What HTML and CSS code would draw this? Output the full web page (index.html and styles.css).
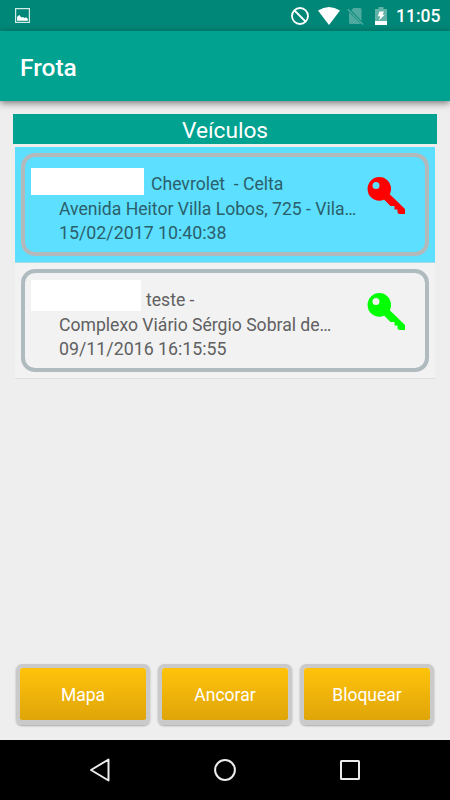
FILE: index.html
```html
<!DOCTYPE html>
<html lang="pt-BR">
<head>
    <meta charset="UTF-8">
    <meta name="viewport" content="width=device-width, initial-scale=1.0">
    <title>Frota</title>
    <link rel="stylesheet" href="styles.css">
</head>
<body>
    <div class="status-bar">
        <svg class="icon-picture" width="15" height="15" viewBox="0 0 15 15">
            <rect x="0.6" y="0.6" width="13.8" height="13.8" fill="none" stroke="#d5ebe8" stroke-width="1.2"/>
            <path d="M2 12.7V9l1.3-1.2L4.5 7l1.5 2.2h2.5L9.5 10l1.5-.8 1.8 1.5v2z" fill="#fff"/>
        </svg>
        <div class="status-icons">
            <svg width="18" height="18" viewBox="0 0 18 18">
                <circle cx="9" cy="9" r="8" fill="none" stroke="#fff" stroke-width="1.8"/>
                <path d="M3.5 3.5l11 11" stroke="#fff" stroke-width="1.8"/>
            </svg>
            <svg class="icon-wifi" width="22" height="18" viewBox="0 0 22 18">
                <path d="M0 3.5Q11-3.5 22 3.5L11 18z" fill="#fff"/>
            </svg>
            <svg class="icon-sim" width="17" height="18" viewBox="0 0 17 18">
                <path d="M6.5 1H13q1.5 0 1.5 1.5V14L4.2 3.300zM2 5.200L14 17H3.500Q2 17 2 15.500z" fill="#4eaa9e"/>
                <path d="M.8 2.300L16 17.500" stroke="#4eaa9e" stroke-width="1.500"/>
            </svg>
            <svg class="icon-battery" width="12" height="18" viewBox="0 0 12 18">
                <path d="M3.5 0h5v2H12v12H0V2h3.5z" fill="#61b3a8"/>
                <path d="M0 14h12v4H0z" fill="#fff"/>
                <path d="M4.5 4.5h4.5L7.700 7.800h2L4 13.500l1.200-4.200H2.800z" fill="#fff"/>
            </svg>
            <span class="clock">11:05</span>
        </div>
    </div>

    <header class="app-bar">
        <h1>Frota</h1>
    </header>

    <main class="content">
        <h2 class="list-title">Veículos</h2>

        <div class="vehicle-list">
            <div class="vehicle selected">
                <div class="card">
                    <div class="info">
                        <div class="name"><span class="plate"></span>Chevrolet&nbsp; - Celta</div>
                        <div class="address">Avenida Heitor Villa Lobos, 725 - Vila…</div>
                        <div class="date">15/02/2017 10:40:38</div>
                    </div>
                    <svg class="key key-locked" width="38" height="38" viewBox="0 0 38 38">
                        <path fill-rule="evenodd" d="M12.300 0a11.700 11.900 0 1 1 0 23.800a11.700 11.900 0 1 1 0-23.800zM9 5a3.500 3.500 0 1 0 0 7a3.500 3.500 0 1 0 0-7z"/>
                        <path d="M22 16.500L38.500 32.500v4.500h-6.500l-1.500-1.500V32.500H27.500V29h-4l-6.500-6.500z"/>
                    </svg>
                </div>
            </div>
            <div class="vehicle">
                <div class="card">
                    <div class="info">
                        <div class="name"><span class="plate"></span>teste -</div>
                        <div class="address">Complexo Viário Sérgio Sobral de…</div>
                        <div class="date">09/11/2016 16:15:55</div>
                    </div>
                    <svg class="key key-free" width="38" height="38" viewBox="0 0 38 38">
                        <path fill-rule="evenodd" d="M12.300 0a11.700 11.900 0 1 1 0 23.800a11.700 11.900 0 1 1 0-23.800zM9 5a3.500 3.500 0 1 0 0 7a3.500 3.500 0 1 0 0-7z"/>
                        <path d="M22 16.500L38.500 32.500v4.500h-6.500l-1.500-1.500V32.500H27.500V29h-4l-6.500-6.500z"/>
                    </svg>
                </div>
            </div>
        </div>

        <div class="actions">
            <button type="button">Mapa</button>
            <button type="button">Ancorar</button>
            <button type="button">Bloquear</button>
        </div>
    </main>

    <nav class="nav-bar">
        <svg width="22" height="26" viewBox="0 0 22 26">
            <path d="M20.5 2.5v21L3 13z" fill="none" stroke="#ececec" stroke-width="2" stroke-linejoin="round"/>
        </svg>
        <svg width="22" height="22" viewBox="0 0 22 22">
            <circle cx="11" cy="11" r="9.9" fill="none" stroke="#ececec" stroke-width="2"/>
        </svg>
        <svg width="20" height="20" viewBox="0 0 20 20">
            <rect x="1" y="1" width="18" height="18" rx="0.5" fill="none" stroke="#ececec" stroke-width="2"/>
        </svg>
    </nav>
</body>
</html>
```
FILE: styles.css
```css
* {
    box-sizing: border-box;
}

html, body {
    height: 100%;
    margin: 0;
    padding: 0;
}

body {
    display: flex;
    flex-direction: column;
    font-family: Roboto, "Liberation Sans", sans-serif;
    background-color: #eeeeee;
    overflow: hidden;
}

svg {
    display: block;
    flex: none;
}

.status-bar {
    flex: none;
    height: 31px;
    padding: 0 10px 0 15px;
    display: flex;
    align-items: center;
    justify-content: space-between;
    background-color: #018777;
}

.status-icons {
    display: flex;
    align-items: center;
}

.icon-wifi {
    margin-left: 9px;
}

.icon-sim {
    margin-left: 7px;
}

.icon-battery {
    margin-left: 11px;
}

.clock {
    width: 44px;
    margin-left: 9px;
    font-size: 17.5px;
    font-weight: 500;
    line-height: 20px;
    text-align: right;
    color: #fff;
    white-space: nowrap;
}

.app-bar {
    flex: none;
    height: 70px;
    padding: 3px 20px 0;
    display: flex;
    align-items: center;
    background-color: #01a290;
    box-shadow: 0 2px 7px rgba(0, 0, 0, 0.5);
}

.app-bar h1 {
    margin: 0;
    font-size: 24.5px;
    font-weight: 500;
    line-height: 28px;
    color: #fff;
}

.content {
    flex: 1;
    display: flex;
    flex-direction: column;
    padding: 13px 13px 15px;
}

.list-title {
    margin: 0;
    height: 30px;
    font-size: 22.7px;
    font-weight: 400;
    line-height: 33px;
    text-align: center;
    color: #fff;
    background-color: #01a290;
}

.vehicle-list {
    flex: 1;
    margin: 3px 2px 0;
}

.vehicle {
    height: 116px;
    padding: 6px 6px 7px;
    background-color: #f2f2f2;
    border-bottom: 1px solid #dedede;
}

.vehicle.selected {
    background-color: #5ddfff;
    border-bottom-color: #a5dcea;
}

.card {
    height: 103px;
    padding: 12px 20px 0 6px;
    display: flex;
    justify-content: space-between;
    border: 4px solid #b0bbbf;
    border-radius: 14px;
}

.selected .card {
    border-color: #b3b9bb;
}

.info {
    font-size: 17.6px;
    line-height: 24.4px;
    color: #606060;
    white-space: nowrap;
}

.selected .info {
    color: #2a5f6c;
}

.name {
    display: flex;
    height: 28px;
    padding-top: 3px;
}

.plate {
    width: 110px;
    height: 31px;
    margin: -8px 5px 0 0;
    background-color: #fff;
}

.selected .plate {
    width: 113px;
    height: 27px;
    margin: -4px 7px 0 0;
}

.address, .date {
    padding-left: 28px;
}

.date {
    font-size: 17.8px;
}

.key {
    margin-top: 8px;
}

.key-locked {
    fill: #ff0000;
}

.key-free {
    fill: #00ff00;
}

.actions {
    display: flex;
    gap: 8px;
    padding: 0 3px;
}

.actions button {
    flex: 1;
    height: 61px;
    padding: 2px 0 0;
    font-family: inherit;
    font-size: 17.5px;
    color: #fff;
    border: 4px solid #cacaca;
    border-bottom-width: 5px;
    border-radius: 6px;
    background: linear-gradient(#ffc30b, #dfa509) padding-box;
    box-shadow: 0 1px 2px rgba(0, 0, 0, 0.3);
}

.nav-bar {
    flex: none;
    height: 60px;
    padding: 0 90px 0 88px;
    display: flex;
    align-items: center;
    justify-content: space-between;
    background-color: #000;
}
```
